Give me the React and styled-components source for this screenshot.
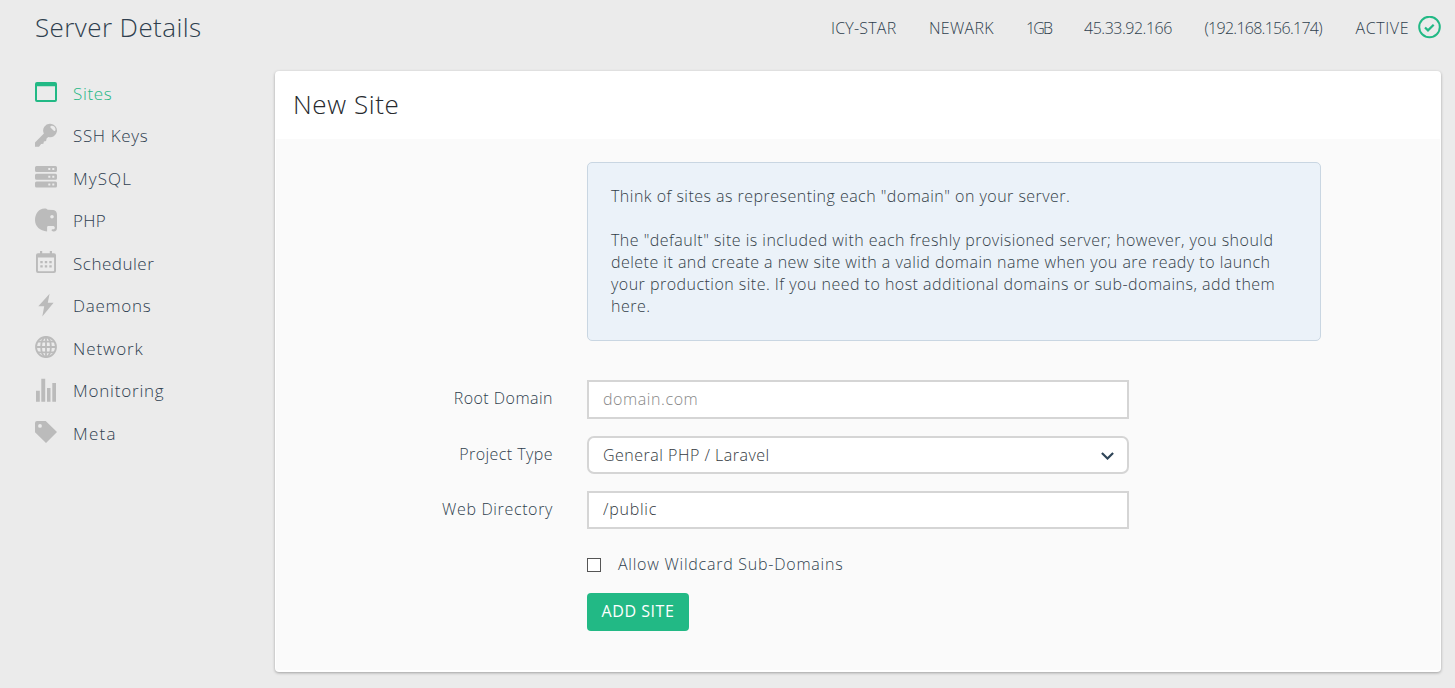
import React from "react";
import styled, { createGlobalStyle } from "styled-components";

const GlobalStyle = createGlobalStyle`
  *, *::before, *::after { box-sizing: border-box; }
  body {
    margin: 0;
    background: #ebebeb;
    color: #2f3f4e;
    font-family: "Open Sans", "Noto Sans", sans-serif;
    font-size: 16px;
    font-weight: 345;
  }
`;

const Page = styled.div`
  width: 100%;
  height: 688px;
  overflow: hidden;
`;

const Header = styled.header`
  display: flex;
  justify-content: space-between;
  height: 71px;
  padding: 0 14px 0 35px;
`;

const PageTitle = styled.h1`
  margin: 0;
  font-size: 26px;
  font-weight: 330;
  line-height: 54px;
  letter-spacing: 0.42px;
`;

const StatusList = styled.ul`
  display: flex;
  gap: 32px;
  margin: 0;
  padding: 0;
  list-style: none;
  line-height: 57px;
`;

const StatusItem = styled.li`
  display: flex;
  width: ${(p) => p.$width}px;
  letter-spacing: ${(p) => p.$spacing}px;
  white-space: nowrap;
  svg { flex: none; margin: 16px 0 0 auto; }
`;

const Columns = styled.div`
  display: flex;
  padding: 0 14px 0 35px;
`;

const Nav = styled.nav`
  flex: none;
  width: 240px;
`;

const NavLink = styled.a`
  display: flex;
  align-items: center;
  gap: 16px;
  height: 42.5px;
  color: ${(p) => (p.$active ? "#1fb785" : "#2f4050")};
  font-size: 17px;
  letter-spacing: ${(p) => p.$spacing}px;
  text-decoration: none;
  svg { flex: none; color: ${(p) => (p.$active ? "#22b985" : "#bbbbbb")}; }
  span { padding-top: 2px; }
`;

const Panel = styled.main`
  flex: 1;
  height: 601px;
  padding: 0 1px 2px;
  border-radius: 4px;
  background: #fff;
  box-shadow: 0 1px 3px rgba(0, 0, 0, 0.32);
`;

const PanelTitle = styled.h2`
  height: 68px;
  margin: 0;
  padding-left: 17px;
  color: #26292d;
  font-size: 26px;
  font-weight: 330;
  line-height: 67px;
  letter-spacing: 0.6px;
`;

const PanelBody = styled.div`
  height: 531px;
  padding: 23px 119px 0 0;
  background: #fafafa;
`;

const Notice = styled.section`
  height: 179px;
  margin-left: 311px;
  padding: 22px 23px;
  border: 1px solid #c9d6e2;
  border-radius: 5px;
  background: #ebf2f9;
  color: #333e48;
  line-height: 22px;
  letter-spacing: 0.475px;
  p { margin: 0 0 22px; }
`;

const Form = styled.form`
  display: grid;
  grid-template-columns: 277px 542px;
  column-gap: 34px;
  margin-top: 39px;
`;

const FieldLabel = styled.label`
  padding-top: 7px;
  line-height: 22px;
  text-align: right;
  letter-spacing: ${(p) => p.$spacing}px;
`;

const Control = styled.div`
  display: flex;
  align-items: center;
  height: ${(p) => p.$height}px;
  margin-bottom: 17px;
  padding: 0 13px 0 14px;
  border: 2px solid #d5d5d5;
  border-radius: ${(p) => (p.$rounded ? 7 : 0)}px;
  background: #fff;
  letter-spacing: ${(p) => p.$spacing}px;
`;

const Input = styled.input`
  flex: 1;
  min-width: 0;
  padding: 0 0 2px;
  border: 0;
  outline: 0;
  background: transparent;
  color: #333a41;
  font: inherit;
  letter-spacing: inherit;
  &::placeholder { color: #878787; opacity: 1; }
`;

const Select = styled.select`
  flex: 1;
  padding: 0;
  border: 0;
  outline: 0;
  background: transparent;
  appearance: none;
  color: #333a41;
  font: inherit;
  letter-spacing: inherit;
`;

const CheckLabel = styled.label`
  grid-column: 2;
  display: flex;
  align-items: center;
  gap: 17px;
  height: 22px;
  margin-top: 7px;
  letter-spacing: 0.76px;
`;

const Checkbox = styled.input`
  width: 14px;
  height: 14px;
  margin: 2px 0 0;
  border: 1px solid #555;
  background: #fff;
  appearance: none;
`;

const SubmitButton = styled.button`
  grid-column: 2;
  width: 102px;
  height: 38px;
  margin-top: 18px;
  padding: 0 0 2px;
  border: 0;
  border-radius: 4px;
  background: #22b985;
  color: #fff;
  font: inherit;
  font-weight: 400;
  letter-spacing: 0.55px;
`;

const Icon = ({ children }) => (
  <svg width="22" height="24" viewBox="0 0 22 24" fill="currentColor">{children}</svg>
);

const SitesIcon = () => (
  <Icon><path fillRule="evenodd" d="M2 2h18a2 2 0 0 1 2 2v16a2 2 0 0 1-2 2H2a2 2 0 0 1-2-2V4a2 2 0 0 1 2-2zm0 4.2V20h18V6.2z" /></Icon>
);
const KeyIcon = () => (
  <Icon><path fillRule="evenodd" d="M15.4.8a6.7 6.7 0 1 1-2.1 13.1l-1.7 1.7-.5 2.4-2.2.4-.5 2.3-2.3.4L4 23.8H0v-4.4l8.9-8.9A6.7 6.7 0 0 1 15.4.8zm.6 2.1c-.9.5-.9 1.2-.3 1.9l2.8 2.8c.7.7 1.5.6 1.9-.4.7-2.6-1.9-5-4.4-4.3z" /></Icon>
);
const DatabaseIcon = () => (
  <Icon>
    {[1, 8.8, 16.6].map((y) => (
      <path key={y} fillRule="evenodd" d={`M1.5 ${y}h19a1.5 1.5 0 0 1 1.5 1.5v3a1.5 1.5 0 0 1-1.5 1.5h-19a1.5 1.5 0 0 1-1.5-1.5v-3a1.5 1.5 0 0 1 1.5-1.5zm11.8 2v2h2v-2zm4 0v2h2v-2z`} />
    ))}
  </Icon>
);
const ElephantIcon = () => (
  <Icon><path fillRule="evenodd" d="M9.5.5c1.7 0 2.3.6 3.200 1.200l5.600.300c2.400.3 3.700 2.200 3.700 4.900V20a3.400 3.400 0 0 1-3.500 3.400c-1.200 0-1.900-.4-1.900-1.100s.5-1 1.300-1c1.200 0 1.900-.6 1.900-1.600 0-1.200-.8-1.800-2.200-1.800h-4.100c-1 0-1.400.5-1.400 1.500v4C5 23 0 18.400 0 12 0 5.900 3.700.500 9.500.500zm7.500 6.500a1.800 1.800 0 1 0 0 3.600 1.800 1.800 0 0 0 0-3.600z" /></Icon>
);
const CalendarIcon = () => (
  <Icon>
    <path fillRule="evenodd" d="M3 3.200h2V1h2.200v2.200h7.600V1H17v2.200h2a2 2 0 0 1 2 2V21a2 2 0 0 1-2 2H3a2 2 0 0 1-2-2V5.200a2 2 0 0 1 2-2zm-.1 4.300v12.700q0 1 1 1h14.200q1 0 1-1V7.500z" />
    <path d="M5.300 11h2.400v2.200H5.300zm4.500 0h2.400v2.200H9.800zm4.500 0h2.400v2.200h-2.400zm-9 4.300h2.400v2.200H5.300zm4.500 0h2.400v2.200H9.800zm4.500 0h2.400v2.200h-2.400z" />
  </Icon>
);
const BoltIcon = () => (
  <Icon><path d="M14.600.8 3.300 13.200h5.900L7.300 23.500 18.600 9.800h-5.800z" /></Icon>
);
const GlobeIcon = () => (
  <Icon>
    <g fill="none" stroke="currentColor" strokeWidth="1.800">
      <circle cx="11" cy="12" r="10" />
      <ellipse cx="11" cy="12" rx="4.900" ry="10" />
      <path d="M11 2v20M1 12h20M2.800 6.600h16.400M2.800 17.400h16.400" />
    </g>
  </Icon>
);
const ChartIcon = () => (
  <Icon><path d="M1 12.700h3.800v11.100H1zM6.300.8h3.900v23H6.300zM12 10h3.500v13.800H12zM17.300 5h3.700v18.800h-3.700z" /></Icon>
);
const TagIcon = () => (
  <Icon><path fillRule="evenodd" d="M2 1h8.700L22 12 11 23 0 12.200V3a2 2 0 0 1 2-2zm3 3a1.900 1.900 0 1 0 0 3.800A1.900 1.900 0 0 0 5 4z" /></Icon>
);
const ActiveIcon = () => (
  <svg width="23" height="23" viewBox="0 0 23 23" fill="none" stroke="#22b985" strokeWidth="2">
    <circle cx="11.500" cy="11" r="10.300" />
    <path d="m7 11.500 3 2.900 5.700-5.600" strokeWidth="2.200" />
  </svg>
);
const ChevronIcon = () => (
  <svg width="13" height="9" viewBox="0 0 13 9" fill="none" stroke="#2f4558" strokeWidth="2.200">
    <path d="m.900 2 5.600 5.500 5.600-5.500" />
  </svg>
);

const navItems = [
  { label: "Sites", icon: SitesIcon, spacing: 0.65, active: true },
  { label: "SSH Keys", icon: KeyIcon, spacing: 0.65 },
  { label: "MySQL", icon: DatabaseIcon, spacing: 1.1 },
  { label: "PHP", icon: ElephantIcon, spacing: 0.35 },
  { label: "Scheduler", icon: CalendarIcon, spacing: 0.52 },
  { label: "Daemons", icon: BoltIcon, spacing: 0.75 },
  { label: "Network", icon: GlobeIcon, spacing: 0.9 },
  { label: "Monitoring", icon: ChartIcon, spacing: 0.8 },
  { label: "Meta", icon: TagIcon, spacing: 1.25 },
];

const statusItems = [
  { label: "ICY-STAR", width: 66, spacing: 0.2 },
  { label: "NEWARK", width: 65, spacing: 0.3 },
  { label: "1GB", width: 26, spacing: -1.8 },
  { label: "45.33.92.166", width: 88.5, spacing: -0.48 },
  { label: "(192.168.156.174)", width: 119, spacing: -0.73 },
];

export default function App() {
  return (
    <Page>
      <GlobalStyle />
      <Header>
        <PageTitle>Server Details</PageTitle>
        <StatusList>
          {statusItems.map((s) => (
            <StatusItem key={s.label} $width={s.width} $spacing={s.spacing}>{s.label}</StatusItem>
          ))}
          <StatusItem $width={85.5} $spacing={0.6}>ACTIVE<ActiveIcon /></StatusItem>
        </StatusList>
      </Header>
      <Columns>
        <Nav>
          {navItems.map(({ label, icon: Glyph, spacing, active }) => (
            <NavLink key={label} $active={active} $spacing={spacing}>
              <Glyph />
              <span>{label}</span>
            </NavLink>
          ))}
        </Nav>
        <Panel>
          <PanelTitle>New Site</PanelTitle>
          <PanelBody>
            <Notice>
              <p>Think of sites as representing each "domain" on your server.</p>
              <p>
                The "default" site is included with each freshly provisioned server; however, you should
                delete it and create a new site with a valid domain name when you are ready to launch
                your production site. If you need to host additional domains or sub-domains, add them
                here.
              </p>
            </Notice>
            <Form>
              <FieldLabel htmlFor="domain" $spacing={0.47}>Root Domain</FieldLabel>
              <Control $height={39} $spacing={0.58}>
                <Input id="domain" placeholder="domain.com" />
              </Control>
              <FieldLabel htmlFor="type" $spacing={0.44}>Project Type</FieldLabel>
              <Control $height={38} $spacing={0.5} $rounded>
                <Select id="type" defaultValue="php">
                  <option value="php">General PHP / Laravel</option>
                </Select>
                <ChevronIcon />
              </Control>
              <FieldLabel htmlFor="directory" $spacing={0.64}>Web Directory</FieldLabel>
              <Control $height={38} $spacing={0.75}>
                <Input id="directory" defaultValue="/public" />
              </Control>
              <CheckLabel>
                <Checkbox type="checkbox" />
                Allow Wildcard Sub-Domains
              </CheckLabel>
              <SubmitButton type="button">ADD SITE</SubmitButton>
            </Form>
          </PanelBody>
        </Panel>
      </Columns>
    </Page>
  );
}
